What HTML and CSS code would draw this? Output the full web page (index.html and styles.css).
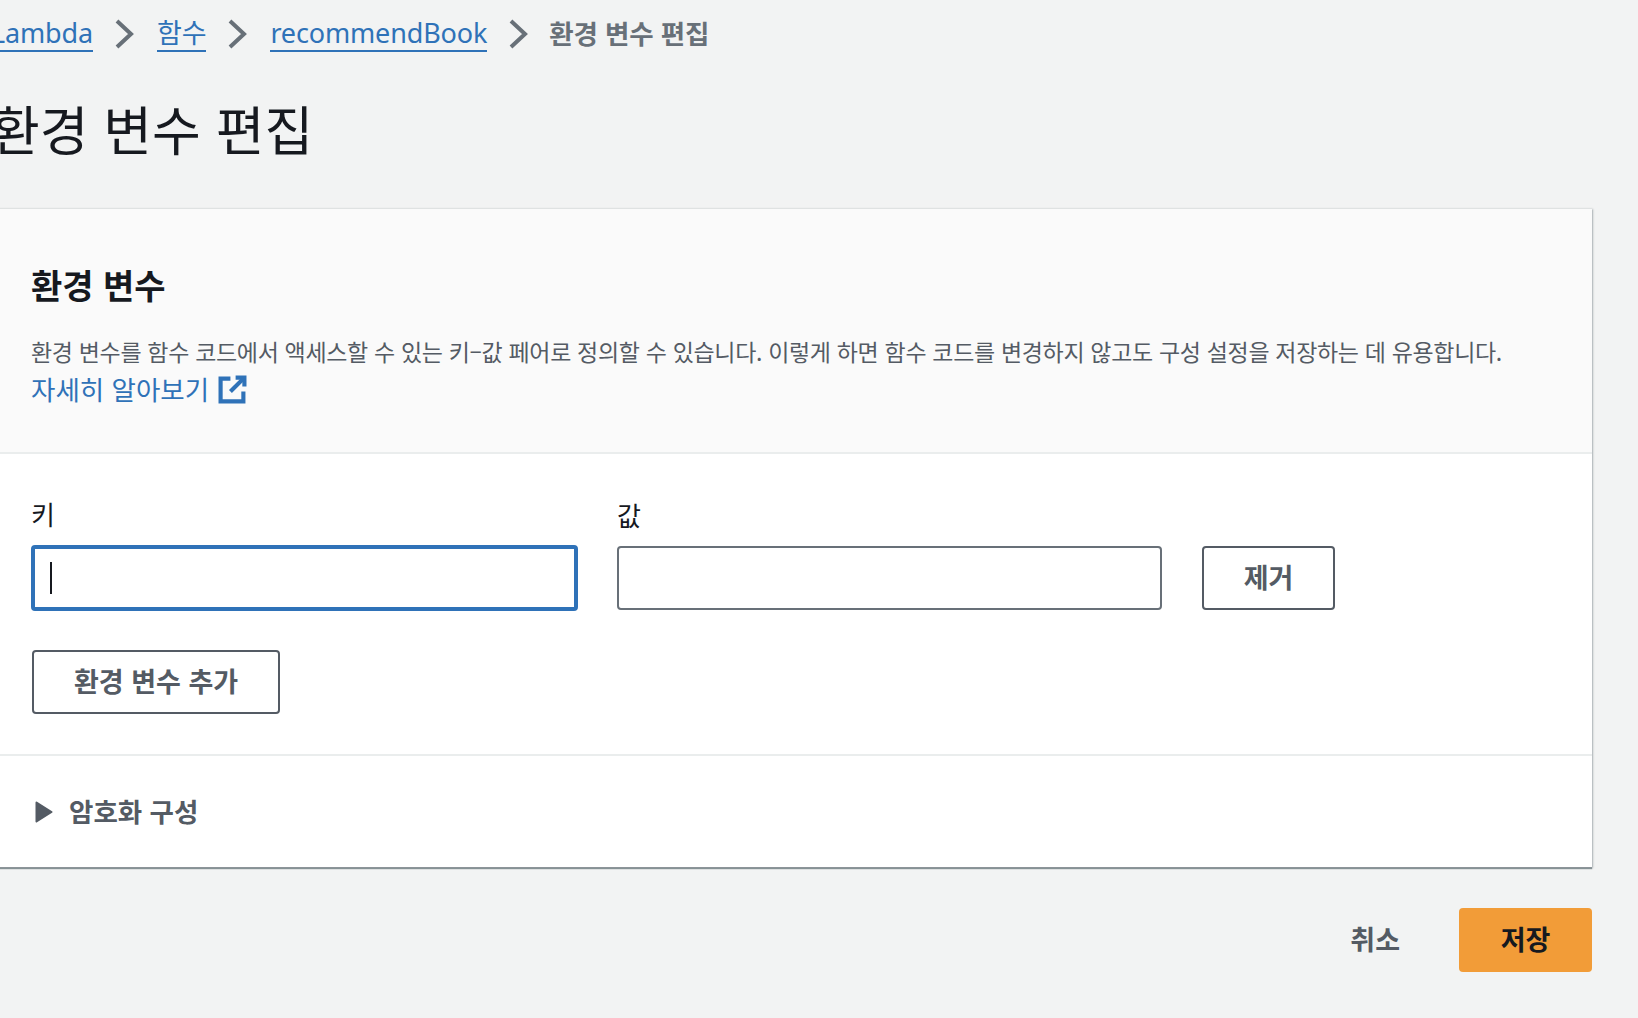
FILE: index.html
```html
<!DOCTYPE html>
<html lang="ko">
<head>
<meta charset="utf-8">
<title>환경 변수 편집</title>
<link rel="stylesheet" href="styles.css">
</head>
<body>
<main class="page">
  <nav class="crumbs">
    <a class="crumb-link" href="#">Lambda</a>
    <svg class="chev" viewBox="0 0 20 30"><path d="M2 2l14 13L2 28"/></svg>
    <a class="crumb-link" href="#">함수</a>
    <svg class="chev" viewBox="0 0 20 30"><path d="M2 2l14 13L2 28"/></svg>
    <a class="crumb-link" href="#">recommendBook</a>
    <svg class="chev" viewBox="0 0 20 30"><path d="M2 2l14 13L2 28"/></svg>
    <span class="crumb-current">환경 변수 편집</span>
  </nav>
  <h1 class="title">환경 변수 편집</h1>
  <section class="card">
    <header class="card-head">
      <h2 class="card-title">환경 변수</h2>
      <p class="desc">환경 변수를 함수 코드에서 액세스할 수 있는 키–값 페어로 정의할 수 있습니다. 이렇게 하면 함수 코드를 변경하지 않고도 구성 설정을 저장하는 데 유용합니다.</p>
      <a class="learn" href="#">자세히 알아보기
        <svg class="ext" viewBox="0 0 28 28"><path d="M12 3.500H2.500v22h22V16"/><path d="M17 2.500h8.500V11"/><path d="M25 3L12 16"/></svg>
      </a>
    </header>
    <div class="card-body">
      <div class="fields">
        <label class="field">
          <span class="label">키</span>
          <span class="input focus"><span class="caret"></span></span>
        </label>
        <label class="field">
          <span class="label">값</span>
          <span class="input"></span>
        </label>
        <button class="btn remove">제거</button>
      </div>
      <button class="btn add">환경 변수 추가</button>
    </div>
    <div class="expander">
      <svg class="tri" viewBox="0 0 18 22"><path d="M1.500 1.500L16.500 11 1.500 20.500z"/></svg>
      <span class="exp-text">암호화 구성</span>
    </div>
  </section>
  <footer class="actions">
    <button class="cancel">취소</button>
    <button class="save">저장</button>
  </footer>
</main>
</body>
</html>
```
FILE: styles.css
```css
* { box-sizing: border-box; }
html, body { margin: 0; height: 100%; overflow: hidden; }
body {
  background: #f2f3f3;
  font-family: "Noto Sans", "Noto Sans CJK KR", sans-serif;
  color: #16191f;
}
.page { width: 1601px; margin-left: -9px; }
.crumbs {
  display: flex;
  align-items: center;
  height: 34px;
  margin-top: 17px;
  font-size: 27px;
  letter-spacing: -.15px;
  line-height: 34px;
  white-space: nowrap;
}
.crumb-link {
  color: #2f72b8;
  text-decoration: none;
  border-bottom: 2px solid #2f72b8;
  height: 36px;
  line-height: 34px;
}
.chev { width: 20px; height: 30px; margin: 0 22px; flex: none; }
.chev path { fill: none; stroke: #687078; stroke-width: 4; }
.crumb-current {
  color: #687078;
  font-weight: 700;
  font-size: 26.500px;
  font-family: "Noto Sans CJK KR", sans-serif;
  margin-left: -2px;
  padding-bottom: 2px;
}
.title {
  margin: 42px 0 0;
  font-family: "Noto Sans CJK KR", sans-serif;
  font-size: 53px;
  line-height: 70px;
  font-weight: 400;
  color: #16191f;
}
.card {
  margin-top: 46px;
  background: #fff;
  box-shadow: 1px 0 2px rgba(0, 28, 36, .25), 0 1px 1px rgba(0, 28, 36, .4);
  border-bottom: 1px solid #8d9499;
}
.card-head {
  height: 245px;
  padding: 52px 40px 0;
  background: #fafafa;
  border-bottom: 2px solid #eaeded;
  font-family: "Noto Sans CJK KR", sans-serif;
}
.card-title { margin: 0; font-size: 34px; line-height: 48px; font-weight: 700; }
.desc {
  margin: 24px 0 0;
  font-size: 23px;
  line-height: 36px;
  color: #545b64;
  letter-spacing: -.33px;
  white-space: nowrap;
}
.learn {
  display: flex;
  align-items: center;
  gap: 9px;
  margin-top: 1px;
  color: #2f72b8;
  font-size: 26.500px;
  line-height: 38px;
  text-decoration: none;
}
.ext { width: 29px; height: 29px; }
.ext path { fill: none; stroke: #2f72b8; stroke-width: 4; }
.card-body {
  height: 302px;
  padding: 43px 40px 0;
  border-bottom: 2px solid #eaeded;
  font-family: "Noto Sans CJK KR", sans-serif;
}
.fields { display: flex; align-items: flex-end; gap: 39px; }
.field { display: flex; flex-direction: column; width: 547px; }
.field:nth-child(2) { width: 545px; margin-right: 1px; }
.label { font-size: 26px; line-height: 34px; height: 48px; }
.input {
  display: flex;
  align-items: center;
  height: 64px;
  background: #fff;
  border: 2px solid #687078;
  border-radius: 4px;
}
.input.focus { border: 4px solid #2f72b8; height: 66px; margin: 0 0 -1px; padding-left: 15px; }
.caret { width: 2px; height: 32px; background: #16191f; }
.btn {
  display: block;
  height: 64px;
  background: #fff;
  border: 2px solid #545b64;
  border-radius: 4px;
  color: #545b64;
  font: 700 27px/1 "Noto Sans CJK KR", sans-serif;
  padding: 0 0 4px;
}
.remove { width: 133px; }
.add { width: 248px; margin: 40px 0 0 1px; }
.expander {
  display: flex;
  align-items: center;
  height: 111px;
  padding-left: 44px;
  gap: 16px;
  font-family: "Noto Sans CJK KR", sans-serif;
  font-size: 26.500px;
  font-weight: 700;
  color: #545b64;
}
.exp-text { padding-bottom: 2px; }
.tri { width: 18px; height: 22px; }
.tri path { fill: #545b64; stroke: #545b64; stroke-width: 2; stroke-linejoin: round; }
.actions {
  display: flex;
  justify-content: flex-end;
  align-items: center;
  gap: 59px;
  margin-top: 40px;
}
.cancel, .save {
  border: 0;
  font: 700 27px/1 "Noto Sans CJK KR", sans-serif;
  padding: 0 0 4px;
}
.cancel { background: none; color: #545b64; }
.save {
  width: 133px;
  height: 64px;
  background: #f29c38;
  border-radius: 4px;
  color: #16191f;
}
```
